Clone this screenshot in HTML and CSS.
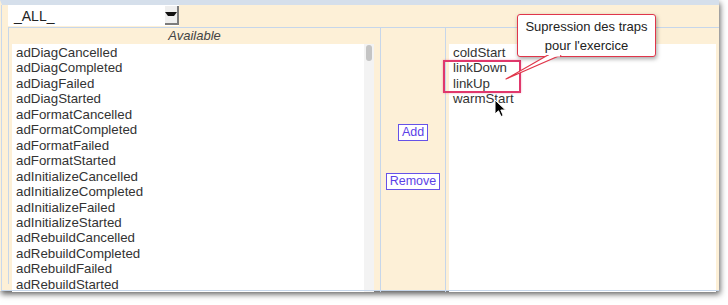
FILE: index.html
```html
<!DOCTYPE html>
<html lang="fr">
<head>
  <meta charset="UTF-8" />
  <title>Traps</title>
  <link rel="stylesheet" href="styles.css">
</head>
<body>
  <div class="window">
    <div class="toolbar">
      <div class="select">
        <span>_ALL_</span>
        <div class="select-btn"><span class="arrow"></span></div>
      </div>
    </div>
    <div class="table">
      <div class="col col-left">
        <div class="col-head">Available</div>
        <div class="listbox">
          <ul class="items">
            <li>adDiagCancelled</li>
            <li>adDiagCompleted</li>
            <li>adDiagFailed</li>
            <li>adDiagStarted</li>
            <li>adFormatCancelled</li>
            <li>adFormatCompleted</li>
            <li>adFormatFailed</li>
            <li>adFormatStarted</li>
            <li>adInitializeCancelled</li>
            <li>adInitializeCompleted</li>
            <li>adInitializeFailed</li>
            <li>adInitializeStarted</li>
            <li>adRebuildCancelled</li>
            <li>adRebuildCompleted</li>
            <li>adRebuildFailed</li>
            <li>adRebuildStarted</li>
          </ul>
          <div class="scroll"><div class="thumb"></div></div>
        </div>
      </div>
      <div class="col col-mid">
        <div class="col-head"></div>
        <div class="buttons">
          <button class="btn btn-add">Add</button>
          <button class="btn btn-remove">Remove</button>
        </div>
      </div>
      <div class="col col-right">
        <div class="col-head">Selected by this policy</div>
        <div class="listbox">
          <ul class="items">
            <li>coldStart</li>
            <li>linkDown</li>
            <li>linkUp</li>
            <li>warmStart</li>
          </ul>
        </div>
      </div>
    </div>
    <div class="bottom"></div>
  </div>

  <!-- annotation over the screenshot -->
  <div class="highlight"></div>
  <svg class="tail" width="70" height="30" viewBox="0 0 70 30">
    <polygon points="44,0 57,0 2,24" fill="#fff" stroke="#e0364a" stroke-width="1.2" stroke-linejoin="round" />
    <line x1="45" y1="0.6" x2="56" y2="0.6" stroke="#fff" stroke-width="2" />
  </svg>
  <div class="tooltip">Supression des traps<br>pour l'exercice</div>
  <svg class="cursor" width="14" height="20" viewBox="0 0 14 20">
    <path d="M1 1 L1 15 L4.5 11.8 L7 17.5 L9.2 16.5 L6.8 11 L11.5 11 Z" fill="#000" stroke="#fff" stroke-width="1" stroke-linejoin="round" />
  </svg>
</body>
</html>
```

FILE: styles.css
```css
* {
  margin: 0;
  padding: 0;
  box-sizing: border-box;
}
body {
  background: #fff;
  font-family: 'Liberation Sans', Arial, sans-serif;
  color: #333;
  position: relative;
  width: 728px;
  height: 305px;
  overflow: hidden;
}
.window {
  width: 719px;
  height: 291px;
  background: #fdf0d7;
  border-top: 5px solid #d5dfeb;
  border-left: 2px solid #fdf0d7;
  box-shadow: 1px 3px 6px rgba(0, 0, 0, 0.65);
  display: flex;
  flex-direction: column;
  position: relative;
}
.window::before {
  content: "";
  position: absolute;
  left: -1px;
  top: 0;
  bottom: 0;
  width: 1px;
  background: #c9d8eb;
}
.toolbar {
  height: 22px;
  padding-left: 6px;
  display: flex;
  align-items: flex-start;
}
.select {
  width: 171px;
  height: 21px;
  background: #fff;
  display: flex;
  justify-content: space-between;
  align-items: center;
  font-size: 14px;
  color: #222;
}
.select span {
  padding: 1px 0 0 6px;
}
.select-btn {
  width: 14px;
  height: 19px;
  background: #efefef;
  border-right: 2px solid #7c7c7c;
  border-bottom: 2px solid #7c7c7c;
  display: flex;
  align-items: center;
  justify-content: center;
}
.arrow {
  width: 0;
  height: 0;
  border-left: 3px solid transparent;
  border-right: 3px solid transparent;
  border-top: 4px solid #111;
}
.table {
  margin-left: 6px;
  display: grid;
  grid-template-columns: 372px 65px 274px;
  border-top: 1px solid #c6d6ea;
  border-left: 1px solid #c6d6ea;
  height: 257px;
}
.col {
  border-right: 1px solid #c6d6ea;
  display: flex;
  flex-direction: column;
}
.col-right {
  border-right: none;
}
.col-head {
  height: 16px;
  font-size: 13px;
  font-style: italic;
  text-align: center;
  color: #444;
  line-height: 16px;
}
.listbox {
  flex: 1;
  background: #fff;
  margin: 0 3px 0 3px;
  display: flex;
  overflow: hidden;
}
.col-left .listbox {
  margin-right: 6px;
}
.col-right .listbox {
  margin-right: 4px;
}
.items {
  list-style: none;
  flex: 1;
  padding: 1px 0 0 4px;
  font-size: 13.3px;
  line-height: 15.45px;
  color: #333;
}
.scroll {
  width: 10px;
  background: #f3f3f3;
  padding: 1px 2px;
}
.thumb {
  width: 6px;
  height: 16px;
  border-radius: 3px;
  background: #c4c4c4;
}
.buttons {
  display: flex;
  flex-direction: column;
  align-items: center;
  padding-top: 80px;
  gap: 32px;
}
.btn {
  font-family: 'Liberation Sans', Arial, sans-serif;
  font-size: 12.5px;
  color: #5b3fe6;
  background: #fff;
  border: 1px solid #6652e8;
  height: 17px;
  line-height: 15px;
  padding: 0 3px;
}
.bottom {
  height: 7px;
  border-bottom: 1px solid #c6d6ea;
}
.highlight {
  position: absolute;
  left: 443px;
  top: 60px;
  width: 78px;
  height: 33px;
  border: 2px solid #e0386c;
  box-shadow: 0 0 2px rgba(224, 56, 108, 0.4);
}
.tooltip {
  position: absolute;
  left: 517px;
  top: 14px;
  width: 139px;
  height: 43px;
  background: #fff;
  border: 1px solid #e0364a;
  border-radius: 3px;
  box-shadow: 1px 2px 4px rgba(0, 0, 0, 0.35);
  font-size: 13px;
  line-height: 19px;
  color: #222;
  text-align: center;
  padding-top: 2px;
}
.tail {
  position: absolute;
  left: 504px;
  top: 55px;
  z-index: 2;
}
.cursor {
  position: absolute;
  left: 494px;
  top: 99px;
}
```
